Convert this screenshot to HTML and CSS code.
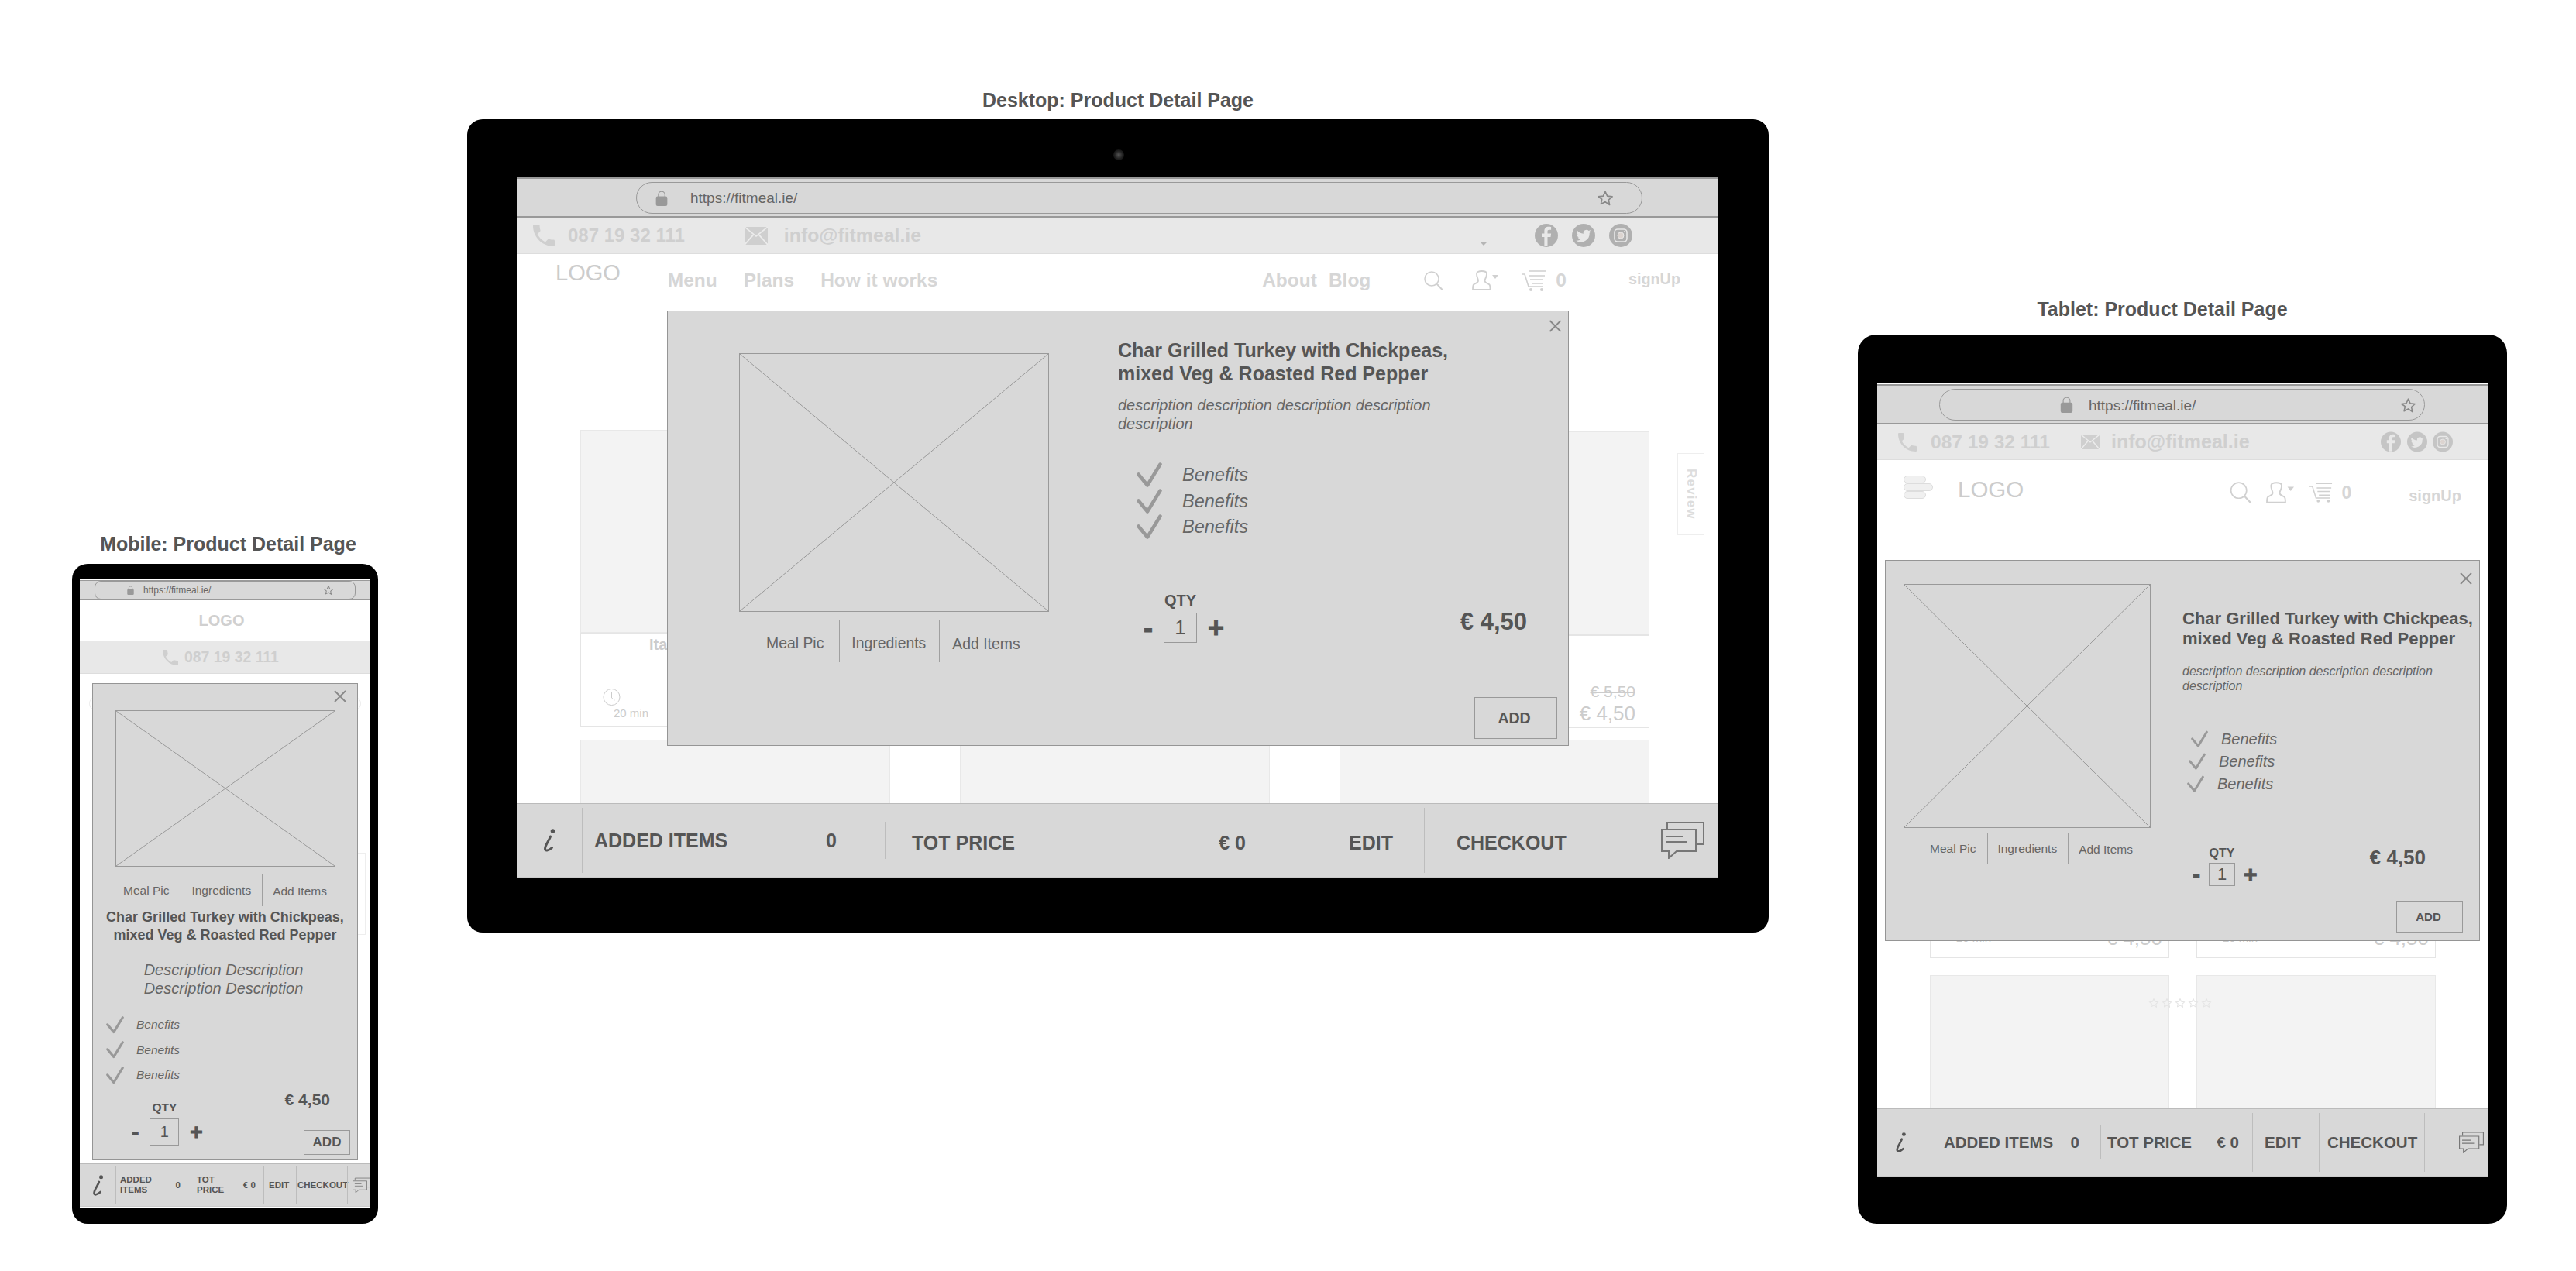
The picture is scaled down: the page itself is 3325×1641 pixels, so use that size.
FILE: index.html
```html
<!DOCTYPE html>
<html lang="en">
<head>
  <meta charset="UTF-8">
  <title>Product Detail Page - Wireframes</title>
  <link rel="stylesheet" href="styles.css">
</head>
<body>
  <svg class="sprite" xmlns="http://www.w3.org/2000/svg">
    <symbol id="i-lock" viewBox="0 0 14 20"><path d="M3 9V6a4 4 0 0 1 8 0v3" fill="none" stroke="currentColor" stroke-width="1"/><rect y="8" width="14" height="12" rx="2" fill="currentColor"/></symbol>
    <symbol id="i-star" viewBox="0 0 24 24"><path d="M12 2.5l2.9 6.4 7 .8-5.200 4.700 1.400 6.900L12 17l-6.100 3.300 1.400-6.900L2.100 9.700l7-.8z" fill="none" stroke="currentColor" stroke-width="1.800" stroke-linejoin="round"/></symbol>
    <symbol id="i-phone" viewBox="3 3 18 18"><path d="M6.600 10.800c1.400 2.800 3.800 5.100 6.600 6.600l2.200-2.200c.3-.3.700-.4 1-.2 1.100.4 2.300.6 3.600.6.600 0 1 .4 1 1V20c0 .6-.4 1-1 1C10.600 21 3 13.400 3 4c0-.6.400-1 1-1h3.500c.6 0 1 .4 1 1 0 1.300.2 2.500.6 3.600.1.300 0 .7-.2 1z" fill="currentColor"/></symbol>
    <symbol id="i-mail" viewBox="0 0 26 23" preserveAspectRatio="none"><rect width="26" height="23" fill="currentColor"/><path d="M0 0l13 12L26 0M0 23l10-13M26 23L16 10" fill="none" stroke="#ececec" stroke-width="1.600"/></symbol>
    <symbol id="i-search" viewBox="0 0 25 25"><circle cx="10" cy="10" r="9" fill="none" stroke="currentColor" stroke-width="1.500"/><path d="M16.500 16.500L24 24.500" stroke="currentColor" stroke-width="2"/></symbol>
    <symbol id="i-user" viewBox="0 0 34 26"><path d="M6 4.500C6 2 9 1 12.500 1S19 2 19 4.500c0 5-2.500 6-2.500 9 0 3 4 3 6 5 1 1 1 3 1 6.500H1c0-3.500 0-5.500 1-6.500 2-2 6-2 6-5 0-3-2-4-2-9z" fill="none" stroke="currentColor" stroke-width="1.800"/><path d="M26 6h8l-4 5z" fill="currentColor"/></symbol>
    <symbol id="i-cart" viewBox="0 0 32 27"><path d="M0 5h4l5 16h19M9 1h22M10 7h20M11 12h17M13 17h15" fill="none" stroke="currentColor" stroke-width="1.600"/><circle cx="12" cy="25" r="2" fill="currentColor"/><circle cx="26" cy="25" r="2" fill="currentColor"/></symbol>
    <symbol id="i-check" viewBox="0 0 33 33"><path d="M2.500 15.500L14 29.500 30.500 2.500" fill="none" stroke="currentColor" stroke-width="4.500" stroke-linecap="round" stroke-linejoin="round"/></symbol>
    <symbol id="i-info" viewBox="0 0 16 30"><circle cx="12.500" cy="3" r="2.800" fill="currentColor"/><path d="M9.500 10C8 15 2.500 21 2.500 26c0 3 4 3 9-1.500" fill="none" stroke="currentColor" stroke-width="3" stroke-linecap="round"/></symbol>
    <symbol id="i-chat" viewBox="0 0 56 48"><path d="M8 9V1h47v28h-9" fill="none" stroke="currentColor" stroke-width="2"/><path d="M1 10h44v28H20l-10 9v-9H1z" fill="none" stroke="currentColor" stroke-width="2"/><path d="M7 19h21M7 26h27" stroke="currentColor" stroke-width="2"/></symbol>
    <symbol id="i-fb" viewBox="0 0 30 30"><circle cx="15" cy="15" r="15" fill="currentColor"/><path d="M16.500 29V17h4l.6-4.500h-4.600V10c0-1.400.5-2.200 2.300-2.200h2.300V4c-.6 0-1.800-.2-3.200-.2-3.300 0-5.500 2-5.500 5.600v3.100H9V17h3.400v12z" fill="#e8e8e8"/></symbol>
    <symbol id="i-tw" viewBox="0 0 30 30"><circle cx="15" cy="15" r="15" fill="currentColor"/><path transform="translate(4.500 4.500) scale(.88)" d="M23 5.900c-.8.400-1.700.6-2.600.7.900-.6 1.600-1.400 2-2.500-.9.500-1.800.9-2.900 1.100a4.500 4.500 0 0 0-7.700 4.100A12.800 12.800 0 0 1 2.500 4.600a4.500 4.500 0 0 0 1.400 6 4.500 4.500 0 0 1-2-.6v.1c0 2.200 1.500 4 3.600 4.400-.7.200-1.400.2-2 .1.600 1.800 2.200 3.100 4.200 3.100A9 9 0 0 1 1 19.600 12.800 12.800 0 0 0 20.700 8.200c.9-.6 1.700-1.400 2.300-2.300z" fill="#e8e8e8"/></symbol>
    <symbol id="i-ig" viewBox="0 0 30 30"><circle cx="15" cy="15" r="15" fill="currentColor"/><rect x="7" y="7" width="16" height="16" rx="4" fill="none" stroke="#e8e8e8" stroke-width="1.600"/><circle cx="15" cy="15" r="4" fill="#dcd4d0" stroke="#e8e8e8" stroke-width="1"/><circle cx="20" cy="10" r="1" fill="#e8e8e8"/></symbol>
    <symbol id="i-clock" viewBox="0 0 22 24"><circle cx="11" cy="12" r="10.500" fill="none" stroke="currentColor"/><path d="M11 5v8l4 3" fill="none" stroke="currentColor"/></symbol>
    <symbol id="i-close" viewBox="0 0 16 16"><path d="M1 1l14 14M15 1L1 15" stroke="currentColor" stroke-width="1.800"/></symbol>
    <symbol id="i-cross" viewBox="0 0 100 100" preserveAspectRatio="none"><path d="M0 0L100 100M100 0L0 100" stroke="currentColor" stroke-width="1" vector-effect="non-scaling-stroke"/></symbol>
  </svg>

  <!-- mobile -->
  <section class="frame mobile">
    <h2 class="frame-title">Mobile: Product Detail Page</h2>
    <div class="device">
      <div class="screen">
        <div class="browser-bar">
          <div class="url-pill">
            <svg class="ic-lock"><use href="#i-lock"/></svg>
            <span class="url">https://fitmeal.ie/</span>
            <svg class="ic-star"><use href="#i-star"/></svg>
          </div>
        </div>
        <div class="mobile-logo">LOGO</div>
        <div class="contact-strip">
          <svg class="ic-phone"><use href="#i-phone"/></svg>
          <span class="contact-text phone-no">087 19 32 111</span>
        </div>
        <div class="page-body">
          <div class="search-pill"></div>
          <div class="card"></div>
        </div>
        <div class="cart-bar">
          <div class="cell cell-info"><svg class="ic-info"><use href="#i-info"/></svg></div>
          <div class="cell cell-added"><span>ADDED<br>ITEMS</span><span>0</span></div>
          <div class="cell cell-total"><span>TOT<br>PRICE</span><span>€ 0</span></div>
          <div class="cell cell-edit">EDIT</div>
          <div class="cell cell-checkout">CHECKOUT</div>
          <div class="cell cell-chat"><svg class="ic-chat"><use href="#i-chat"/></svg></div>
        </div>
        <div class="modal">
          <svg class="modal-close"><use href="#i-close"/></svg>
          <div class="gallery">
            <div class="placeholder"><svg><use href="#i-cross"/></svg></div>
            <div class="tabs">
              <span class="tab">Meal Pic</span>
              <span class="tab">Ingredients</span>
              <span class="tab">Add Items</span>
            </div>
          </div>
          <div class="details">
            <h3 class="meal-name">Char Grilled Turkey with Chickpeas,<br>mixed Veg &amp; Roasted Red Pepper</h3>
            <p class="meal-desc">Description Description<br>Description Description</p>
            <ul class="benefits">
              <li><svg class="ic-check"><use href="#i-check"/></svg>Benefits</li>
              <li><svg class="ic-check"><use href="#i-check"/></svg>Benefits</li>
              <li><svg class="ic-check"><use href="#i-check"/></svg>Benefits</li>
            </ul>
            <div class="buy">
              <div class="qty">
                <span class="qty-label">QTY</span>
                <span class="qty-btn">-</span>
                <span class="qty-value">1</span>
                <span class="qty-btn">+</span>
              </div>
              <div class="buy-side">
                <span class="price">€ 4,50</span>
                <span class="add-btn">ADD</span>
              </div>
            </div>
          </div>
        </div>
      </div>
    </div>
  </section>

  <!-- desktop -->
  <section class="frame desktop">
    <h2 class="frame-title">Desktop: Product Detail Page</h2>
    <div class="device">
      <span class="webcam"></span>
      <div class="screen">
        <div class="browser-bar">
          <div class="url-pill">
            <svg class="ic-lock"><use href="#i-lock"/></svg>
            <span class="url">https://fitmeal.ie/</span>
            <svg class="ic-star"><use href="#i-star"/></svg>
          </div>
        </div>
        <div class="contact-strip">
          <svg class="ic-phone"><use href="#i-phone"/></svg>
          <span class="contact-text phone-no">087 19 32 111</span>
          <svg class="ic-mail"><use href="#i-mail"/></svg>
          <span class="contact-text email">info@fitmeal.ie</span>
          <div class="socials">
            <span class="caret"></span>
            <svg><use href="#i-fb"/></svg>
            <svg><use href="#i-tw"/></svg>
            <svg><use href="#i-ig"/></svg>
          </div>
        </div>
        <nav class="site-nav">
          <span class="logo">LOGO</span>
          <a class="nav-link nav-menu">Menu</a>
          <a class="nav-link nav-plans">Plans</a>
          <a class="nav-link nav-how">How it works</a>
          <a class="nav-link nav-about">About</a>
          <a class="nav-link nav-blog">Blog</a>
          <svg class="ic-search"><use href="#i-search"/></svg>
          <svg class="ic-user"><use href="#i-user"/></svg>
          <svg class="ic-cart"><use href="#i-cart"/></svg>
          <span class="nav-link cart-count">0</span>
          <a class="nav-link sign-up">signUp</a>
        </nav>
        <div class="page-body">
          <div class="card-grid">
            <article class="card">
              <div class="card-img"></div>
              <div class="card-foot">
                <div class="card-time"><svg class="ic-clock"><use href="#i-clock"/></svg><span>20 min</span></div>
                <span class="card-name">Italian Chicken</span>
                <div class="card-prices"><s>€ 5,50</s><span>€ 4,50</span></div>
              </div>
            </article>
            <article class="card">
              <div class="card-img"></div>
              <div class="card-foot">
                <div class="card-time"><svg class="ic-clock"><use href="#i-clock"/></svg><span>20 min</span></div>
                <span class="card-name">Italian Chicken</span>
                <div class="card-prices"><s>€ 5,50</s><span>€ 4,50</span></div>
              </div>
            </article>
            <article class="card">
              <div class="card-img"></div>
              <div class="card-foot">
                <div class="card-time"><svg class="ic-clock"><use href="#i-clock"/></svg><span>20 min</span></div>
                <span class="card-name">Italian Chicken</span>
                <div class="card-prices"><s>€ 5,50</s><span>€ 4,50</span></div>
              </div>
            </article>
            <article class="card"><div class="card-img"></div></article>
            <article class="card"><div class="card-img"></div></article>
            <article class="card"><div class="card-img"></div></article>
          </div>
        </div>
        <div class="cart-bar">
          <div class="cell cell-info"><svg class="ic-info"><use href="#i-info"/></svg></div>
          <div class="cell cell-added"><span>ADDED ITEMS</span><span>0</span></div>
          <div class="cell cell-total"><span>TOT PRICE</span><span>€ 0</span></div>
          <div class="cell cell-edit">EDIT</div>
          <div class="cell cell-checkout">CHECKOUT</div>
          <div class="cell cell-chat"><svg class="ic-chat"><use href="#i-chat"/></svg></div>
        </div>
        <div class="review-tab">Review</div>
        <div class="modal">
          <svg class="modal-close"><use href="#i-close"/></svg>
          <div class="gallery">
            <div class="placeholder"><svg><use href="#i-cross"/></svg></div>
            <div class="tabs">
              <span class="tab">Meal Pic</span>
              <span class="tab">Ingredients</span>
              <span class="tab">Add Items</span>
            </div>
          </div>
          <div class="details">
            <h3 class="meal-name">Char Grilled Turkey with Chickpeas,<br>mixed Veg &amp; Roasted Red Pepper</h3>
            <p class="meal-desc">description description description description<br>description</p>
            <ul class="benefits">
              <li><svg class="ic-check"><use href="#i-check"/></svg>Benefits</li>
              <li><svg class="ic-check"><use href="#i-check"/></svg>Benefits</li>
              <li><svg class="ic-check"><use href="#i-check"/></svg>Benefits</li>
            </ul>
            <div class="buy">
              <div class="qty">
                <span class="qty-label">QTY</span>
                <span class="qty-btn">-</span>
                <span class="qty-value">1</span>
                <span class="qty-btn">+</span>
              </div>
              <div class="buy-side">
                <span class="price">€ 4,50</span>
                <span class="add-btn">ADD</span>
              </div>
            </div>
          </div>
        </div>
      </div>
    </div>
  </section>

  <!-- tablet -->
  <section class="frame tablet">
    <h2 class="frame-title">Tablet: Product Detail Page</h2>
    <div class="device">
      <div class="screen">
        <div class="browser-bar">
          <div class="url-pill">
            <svg class="ic-lock"><use href="#i-lock"/></svg>
            <span class="url">https://fitmeal.ie/</span>
            <svg class="ic-star"><use href="#i-star"/></svg>
          </div>
        </div>
        <div class="contact-strip">
          <svg class="ic-phone"><use href="#i-phone"/></svg>
          <span class="contact-text phone-no">087 19 32 111</span>
          <svg class="ic-mail"><use href="#i-mail"/></svg>
          <span class="contact-text email">info@fitmeal.ie</span>
          <div class="socials">
            <svg><use href="#i-fb"/></svg>
            <svg><use href="#i-tw"/></svg>
            <svg><use href="#i-ig"/></svg>
          </div>
        </div>
        <nav class="site-nav">
          <div class="burger"><span></span><span></span><span></span></div>
          <span class="logo">LOGO</span>
          <svg class="ic-search"><use href="#i-search"/></svg>
          <svg class="ic-user"><use href="#i-user"/></svg>
          <svg class="ic-cart"><use href="#i-cart"/></svg>
          <span class="nav-link cart-count">0</span>
          <a class="nav-link sign-up">signUp</a>
        </nav>
        <div class="page-body">
          <div class="card-grid">
            <article class="card">
              <div class="card-img"></div>
              <div class="card-foot">
                <div class="card-time"><span>20 min</span></div>
                <div class="card-prices"><span>€ 4,50</span></div>
              </div>
            </article>
            <article class="card">
              <div class="card-img"></div>
              <div class="card-foot">
                <div class="card-time"><span>20 min</span></div>
                <div class="card-prices"><span>€ 4,50</span></div>
              </div>
            </article>
            <article class="card"><div class="card-img"></div></article>
            <article class="card"><div class="card-img"></div></article>
          </div>
        </div>
        <div class="cart-bar">
          <div class="cell cell-info"><svg class="ic-info"><use href="#i-info"/></svg></div>
          <div class="cell cell-added"><span>ADDED ITEMS</span><span>0</span></div>
          <div class="cell cell-total"><span>TOT PRICE</span><span>€ 0</span></div>
          <div class="cell cell-edit">EDIT</div>
          <div class="cell cell-checkout">CHECKOUT</div>
          <div class="cell cell-chat"><svg class="ic-chat"><use href="#i-chat"/></svg></div>
        </div>
        <div class="stray-stars">
          <svg><use href="#i-star"/></svg>
          <svg><use href="#i-star"/></svg>
          <svg><use href="#i-star"/></svg>
          <svg><use href="#i-star"/></svg>
          <svg><use href="#i-star"/></svg>
        </div>
        <div class="modal">
          <svg class="modal-close"><use href="#i-close"/></svg>
          <div class="gallery">
            <div class="placeholder"><svg><use href="#i-cross"/></svg></div>
            <div class="tabs">
              <span class="tab">Meal Pic</span>
              <span class="tab">Ingredients</span>
              <span class="tab">Add Items</span>
            </div>
          </div>
          <div class="details">
            <h3 class="meal-name">Char Grilled Turkey with Chickpeas,<br>mixed Veg &amp; Roasted Red Pepper</h3>
            <p class="meal-desc">description description description description<br>description</p>
            <ul class="benefits">
              <li><svg class="ic-check"><use href="#i-check"/></svg>Benefits</li>
              <li><svg class="ic-check"><use href="#i-check"/></svg>Benefits</li>
              <li><svg class="ic-check"><use href="#i-check"/></svg>Benefits</li>
            </ul>
            <div class="buy">
              <div class="qty">
                <span class="qty-label">QTY</span>
                <span class="qty-btn">-</span>
                <span class="qty-value">1</span>
                <span class="qty-btn">+</span>
              </div>
              <div class="buy-side">
                <span class="price">€ 4,50</span>
                <span class="add-btn">ADD</span>
              </div>
            </div>
          </div>
        </div>
      </div>
    </div>
  </section>
</body>
</html>
```

FILE: styles.css
```css
* {
  box-sizing: border-box;
}

body {
  margin: 0;
  width: 3325px;
  height: 1641px;
  position: relative;
  overflow: hidden;
  background: #fff;
  font-family: "Liberation Sans", Arial, sans-serif;
  color: #555;
}

.sprite {
  display: none;
}

svg {
  display: block;
  flex: none;
}

/* canvas: the three devices */
.frame {
  position: absolute;
}

.frame-title {
  margin: 0;
  height: 28px;
  font-size: 25px;
  line-height: 28px;
  font-weight: 700;
  text-align: center;
  white-space: nowrap;
  color: #555;
}

.device {
  position: relative;
  background: #000;
}

.screen {
  position: relative;
  display: flex;
  flex-direction: column;
  overflow: hidden;
  background: #fff;
}

.webcam {
  position: absolute;
  left: 834px;
  top: 39px;
  width: 14px;
  height: 14px;
  border-radius: 50%;
  background: radial-gradient(circle, #555 0%, #222 50%, #000 100%);
}

/* browser chrome */
.browser-bar {
  flex: none;
  display: flex;
  align-items: center;
  background: #d8d8d8;
  border-top: 2px solid #999;
  border-bottom: 2px solid #999;
}

.url-pill {
  display: flex;
  align-items: center;
  border: 1px solid #999;
  color: #666;
}

.url {
  white-space: nowrap;
  font-weight: 400;
}

.ic-lock {
  color: #999;
}

.ic-star {
  margin-left: auto;
  color: #888;
}

/* contact strip */
.contact-strip {
  flex: none;
  display: flex;
  align-items: center;
  background: #e8e8e8;
  border-bottom: 1px solid #ddd;
  color: #cfcfcf;
}

.contact-text {
  font-weight: 700;
  white-space: nowrap;
}

.socials {
  margin-left: auto;
  display: flex;
  align-items: center;
  color: #b0b0b0;
}

.caret {
  align-self: flex-end;
  width: 0;
  height: 0;
  border-left: 4px solid transparent;
  border-right: 4px solid transparent;
  border-top: 4px solid #b5b5b5;
}

/* site nav */
.site-nav {
  flex: none;
  display: flex;
  align-items: center;
  color: #d6d6d6;
}

.logo {
  color: #ccc;
  font-weight: 400;
}

.nav-link {
  font-weight: 700;
  white-space: nowrap;
}

.ic-search,
.ic-user,
.ic-cart {
  color: #d0d0d0;
}

.burger {
  display: flex;
  flex-direction: column;
  align-items: flex-start;
}

.burger span {
  display: block;
  width: 29px;
  height: 10px;
  background: #f0f0f0;
  border: 1px solid #ddd;
  border-radius: 5px;
}

.burger span:nth-child(2) {
  width: 38px;
}

/* background page */
.page-body {
  flex: 1;
  min-height: 0;
  overflow: hidden;
}

.card-grid {
  display: grid;
}

.card-img {
  background: #f3f3f3;
  border: 1px solid #e8e8e8;
}

.card-foot {
  display: flex;
  background: #fff;
  border: 1px solid #e5e5e5;
  border-top: 2px solid #e5e5e5;
  color: #ccc;
}

.card-time {
  display: flex;
  flex-direction: column;
  justify-content: flex-end;
  white-space: nowrap;
}

.card-name {
  font-weight: 700;
  white-space: nowrap;
}

.card-prices {
  margin-left: auto;
  display: flex;
  flex-direction: column;
  align-items: flex-end;
  justify-content: flex-end;
  white-space: nowrap;
}

/* cart bar */
.cart-bar {
  flex: none;
  display: grid;
  align-items: stretch;
  background: #d8d8d8;
  border-top: 1px solid #bbb;
  border-bottom: 1px solid #ccc;
  font-weight: 700;
  color: #555;
  white-space: nowrap;
}

.cell {
  display: flex;
  align-items: center;
  justify-content: space-between;
  border-left: 1px solid #bdbdbd;
}

.cell-info {
  border-left: none;
  justify-content: center;
}

.ic-info {
  color: #555;
}

.ic-chat {
  color: #777;
}

.cell-chat {
  justify-content: flex-end;
}

/* modal */
.modal {
  position: absolute;
  display: flex;
  background: #d8d8d8;
  border: 1px solid #959595;
}

.modal-close {
  position: absolute;
  color: #888;
}

.gallery {
  flex: none;
}

.placeholder {
  border: 1px solid #999;
  color: #999;
}

.placeholder svg {
  width: 100%;
  height: 100%;
}

.tabs {
  display: flex;
  color: #666;
}

.tab {
  display: flex;
  align-items: center;
  white-space: nowrap;
}

.tab + .tab {
  border-left: 1px solid #a0a0a0;
}

.details {
  display: flex;
  flex-direction: column;
  min-width: 0;
}

.meal-name {
  margin: 0;
  font-weight: 700;
  white-space: nowrap;
  color: #555;
}

.meal-desc {
  margin: 0;
  font-style: italic;
  white-space: nowrap;
  color: #666;
}

.benefits {
  margin: 0;
  padding: 0;
  list-style: none;
  font-style: italic;
  color: #666;
}

.benefits li {
  display: flex;
  align-items: center;
}

.ic-check {
  color: #999;
}

.buy {
  flex: 1;
  display: flex;
  min-height: 0;
}

.qty {
  display: grid;
  grid-template-columns: auto auto auto;
  align-items: center;
  align-self: flex-start;
  justify-items: center;
}

.qty-label {
  grid-column: 2;
  grid-row: 1;
  font-weight: 700;
}

.qty-btn {
  grid-column: 1;
  grid-row: 2;
  font-weight: 700;
  color: #555;
  -webkit-text-stroke: 1px #555;
}

.qty-value {
  grid-column: 2;
  grid-row: 2;
  display: flex;
  align-items: center;
  justify-content: center;
  border: 1px solid #999;
  color: #555;
}

.qty-value + .qty-btn {
  grid-column: 3;
}

.buy-side {
  margin-left: auto;
  display: flex;
  flex-direction: column;
  align-items: flex-end;
}

.price {
  font-weight: 700;
  white-space: nowrap;
}

.add-btn {
  margin-top: auto;
  display: flex;
  align-items: center;
  justify-content: center;
  border: 1px solid #999;
  font-weight: 700;
}

/* ---------- desktop ---------- */
.desktop {
  left: 603px;
  top: 115px;
}

.desktop .device {
  width: 1680px;
  height: 1050px;
  margin-top: 11px;
  padding: 75px 65px 0 64px;
  border-radius: 20px;
}

.desktop .screen {
  width: 1551px;
  height: 904px;
}

.desktop .browser-bar {
  height: 52px;
}

.desktop .url-pill {
  width: 1299px;
  height: 41px;
  margin-left: 154px;
  padding: 0 36px 0 24px;
  border-radius: 21px;
  font-size: 19px;
}

.desktop .ic-lock {
  width: 16px;
  height: 21px;
}

.desktop .url {
  margin: 2px 0 0 29px;
}

.desktop .ic-star {
  width: 22px;
  height: 22px;
  margin-top: 2px;
}

.desktop .contact-strip {
  height: 47px;
  padding-left: 20px;
  font-size: 24px;
}

.desktop .ic-phone {
  width: 30px;
  height: 28px;
}

.desktop .phone-no {
  margin-left: 16px;
}

.desktop .ic-mail {
  width: 30px;
  height: 23px;
  margin-left: 77px;
}

.desktop .email {
  margin-left: 21px;
  font-size: 24.800px;
}

.desktop .socials {
  gap: 18px;
  padding-right: 111px;
}

.desktop .socials svg {
  width: 30px;
  height: 30px;
}

.desktop .caret {
  margin-right: 44px;
  margin-bottom: 2px;
}

.desktop .site-nav {
  height: 68px;
  padding: 0 49px 0 50px;
  font-size: 24.500px;
}

.desktop .logo {
  font-size: 29px;
  margin-bottom: 20px;
}

.desktop .nav-menu {
  margin-left: 61px;
}

.desktop .nav-plans {
  margin-left: 34px;
}

.desktop .nav-how {
  margin-left: 34px;
}

.desktop .nav-about {
  margin-left: auto;
}

.desktop .nav-blog {
  margin-left: 15px;
}

.desktop .ic-search {
  width: 25px;
  height: 25px;
  margin-left: 69px;
}

.desktop .ic-user {
  width: 34px;
  height: 26px;
  margin-left: 37px;
}

.desktop .ic-cart {
  width: 32px;
  height: 27px;
  margin-left: 30px;
}

.desktop .cart-count {
  margin-left: 12px;
}

.desktop .sign-up {
  margin-left: 80px;
  margin-bottom: 4px;
  font-size: 19.800px;
}

.desktop .page-body {
  padding: 159px 0 0 82px;
}

.desktop .card-grid {
  grid-template-columns: repeat(3, 400px);
  column-gap: 90px;
  row-gap: 15px;
}

.desktop .card:nth-child(3) {
  margin-top: 2px;
}

.desktop .card-img {
  height: 262px;
}

.desktop .card-foot {
  height: 121px;
  padding: 3px 17px 3px 28px;
}

.desktop .ic-clock {
  width: 23px;
  height: 24px;
}

.desktop .card-time span {
  margin-left: 14px;
  font-size: 15px;
  margin-bottom: 5px;
}

.desktop .card-name {
  margin-left: 1px;
  font-size: 20px;
  line-height: 20px;
}

.desktop .card-prices {
  font-size: 26px;
  line-height: 30px;
}

.desktop .card-prices s {
  font-size: 21px;
  line-height: 26px;
}

.desktop .cart-bar {
  height: 96px;
  grid-template-columns: 84px 391px 533px 163px 224px 156px;
  font-size: 25px;
}

.desktop .cell {
  margin: 5px 0;
}

.desktop .cell-added {
  padding: 0 62px 0 15px;
}

.desktop .cell-added span {
  margin-top: 1px;
}

.desktop .cell-total {
  margin: 23px 0;
  padding: 6px 67px 0 34px;
}

.desktop .cell-edit {
  padding: 6px 0 0 65px;
}

.desktop .cell-checkout {
  padding: 6px 0 0 41px;
}

.desktop .ic-info {
  width: 16px;
  height: 30px;
}

.desktop .ic-chat {
  width: 56px;
  height: 48px;
  margin-right: 18px;
}

.desktop .cell-chat {
  justify-content: flex-end;
}

.desktop .review-tab {
  position: absolute;
  right: 18px;
  top: 356px;
  width: 35px;
  height: 106px;
  display: flex;
  align-items: center;
  justify-content: center;
  background: #fff;
  border: 1px solid #eee;
  writing-mode: vertical-rl;
  font-size: 17px;
  font-weight: 700;
  letter-spacing: 1.200px;
  color: #ddd;
}

.desktop .modal {
  left: 194px;
  top: 172px;
  width: 1164px;
  height: 562px;
  padding: 35px 14px 8px 92px;
}

.desktop .modal-close {
  right: 7px;
  top: 11px;
  width: 19px;
  height: 16px;
}

.desktop .gallery {
  width: 400px;
  margin-top: 19px;
}

.desktop .placeholder {
  height: 334px;
}

.desktop .tabs {
  height: 55px;
  margin-top: 10px;
  font-size: 19.400px;
}

.desktop .tab {
  padding-top: 5px;
}

.desktop .tab:nth-child(1) {
  padding: 5px 20px 0 35px;
}

.desktop .tab:nth-child(2) {
  padding: 5px 17px 0 15px;
}

.desktop .tab:nth-child(3) {
  padding: 7px 0 0 16px;
}

.desktop .details {
  flex: 1;
  margin-left: 89px;
}

.desktop .meal-name {
  font-size: 25px;
  line-height: 30px;
}

.desktop .meal-desc {
  margin-top: 14px;
  font-size: 20px;
  line-height: 24px;
}

.desktop .benefits {
  margin-top: 38px;
  padding-left: 24px;
  font-size: 23.500px;
}

.desktop .benefits li {
  height: 33.500px;
  gap: 26px;
}

.desktop .ic-check {
  width: 33px;
  height: 33px;
}

.desktop .buy {
  margin-top: 65px;
}

.desktop .qty {
  margin-left: 33px;
  column-gap: 14px;
}

.desktop .qty-label {
  font-size: 20px;
  line-height: 24px;
  margin-bottom: 4px;
}

.desktop .qty-btn {
  font-size: 36px;
  line-height: 39px;
}

.desktop .qty-value {
  width: 43px;
  height: 39px;
  font-size: 26px;
}

.desktop .price {
  margin: 22px 39px 0 0;
  font-size: 31px;
  line-height: 36px;
}

.desktop .add-btn {
  width: 107px;
  height: 54px;
  padding-right: 4px;
  font-size: 19.500px;
}

/* ---------- tablet ---------- */
.tablet {
  left: 2398px;
  top: 385px;
}

.tablet .frame-title {
  padding-right: 52px;
}

.tablet .device {
  width: 838px;
  height: 1148px;
  margin-top: 19px;
  padding: 62px 0 0 25px;
  border-radius: 24px;
}

.tablet .screen {
  width: 789px;
  height: 1025px;
  padding-top: 2px;
}

.tablet .browser-bar {
  height: 52px;
}

.tablet .url-pill {
  width: 627px;
  height: 41px;
  margin-left: 80px;
  padding: 0 10px 0 154px;
  border-radius: 21px;
  font-size: 19px;
}

.tablet .ic-lock {
  width: 19px;
  height: 22px;
}

.tablet .url {
  margin: 3px 0 0 19px;
}

.tablet .ic-star {
  width: 21px;
  height: 21px;
  margin-top: 2px;
}

.tablet .contact-strip {
  height: 46px;
  padding-left: 27px;
  font-size: 24.500px;
}

.tablet .ic-phone {
  width: 24px;
  height: 24px;
}

.tablet .phone-no {
  margin-left: 18px;
}

.tablet .ic-mail {
  width: 24px;
  height: 19px;
  margin-left: 40px;
}

.tablet .email {
  margin-left: 15px;
  font-size: 25px;
}

.tablet .socials {
  gap: 7.500px;
  padding-right: 46px;
  color: #c5c5c5;
}

.tablet .socials svg {
  width: 26px;
  height: 27px;
}

.tablet .site-nav {
  height: 84px;
  padding: 0 35px 0 34px;
  font-size: 21px;
}

.tablet .burger {
  margin-bottom: 14px;
}

.tablet .logo {
  margin-left: 32px;
  margin-bottom: 8px;
  font-size: 29.500px;
}

.tablet .ic-search {
  width: 29px;
  height: 28px;
  margin-left: auto;
}

.tablet .ic-user {
  width: 36px;
  height: 28px;
  margin-left: 18px;
}

.tablet .ic-cart {
  width: 30px;
  height: 28px;
  margin-left: 20px;
}

.tablet .cart-count {
  margin-left: 11px;
  font-size: 23px;
}

.tablet .sign-up {
  margin-left: 74px;
  margin-top: 8px;
  font-size: 20px;
}

.tablet .page-body {
  padding: 52px 0 0 68px;
}

.tablet .card-grid {
  grid-template-columns: repeat(2, 309px);
  column-gap: 35px;
  row-gap: 22px;
}

.tablet .card-img {
  height: 380px;
}

.tablet .card-foot {
  height: 127px;
  padding: 0 8px 17px 33px;
  font-size: 15px;
}

.tablet .card-prices {
  font-size: 26px;
  line-height: 26px;
  margin-bottom: -5px;
}

.tablet .cart-bar {
  height: 88px;
  grid-template-columns: 69px 219px 196px 86px 136px 83px;
  font-size: 20.500px;
}

.tablet .cell {
  margin: 5px 0;
}

.tablet .cell-info svg {
  margin-right: 8px;
}

.tablet .cell-added {
  padding: 0 27px 0 16px;
}

.tablet .cell-total {
  margin: 21px 0;
  padding: 0 17px 0 8px;
}

.tablet .cell-edit {
  padding-left: 15px;
}

.tablet .cell-checkout {
  padding-left: 10px;
}

.tablet .ic-info {
  width: 15px;
  height: 26px;
}

.tablet .ic-chat {
  width: 32px;
  height: 28px;
  margin-right: 6px;
}

.tablet .stray-stars {
  position: absolute;
  left: 350px;
  top: 794px;
  display: flex;
  gap: 3px;
  color: #e4e4e4;
}

.tablet .stray-stars svg {
  width: 14px;
  height: 14px;
}

.tablet .modal {
  left: 10px;
  top: 229px;
  width: 768px;
  height: 492px;
  padding: 30px 21px 10px 23px;
}

.tablet .modal-close {
  right: 8px;
  top: 15px;
  width: 18px;
  height: 16px;
}

.tablet .gallery {
  width: 319px;
}

.tablet .placeholder {
  height: 315px;
}

.tablet .tabs {
  height: 41px;
  margin-top: 6px;
  font-size: 15.500px;
}

.tablet .tab:nth-child(1) {
  padding: 0 15px 0 34px;
}

.tablet .tab:nth-child(2) {
  padding: 0 14px 0 12px;
}

.tablet .tab:nth-child(3) {
  padding: 2px 0 0 13px;
}

.tablet .details {
  flex: 1;
  margin-left: 41px;
  padding-top: 32px;
}

.tablet .meal-name {
  font-size: 22px;
  line-height: 26px;
}

.tablet .meal-desc {
  margin-top: 19px;
  font-size: 16px;
  line-height: 19px;
}

.tablet .benefits {
  margin-top: 45px;
  font-size: 20px;
}

.tablet .benefits li {
  height: 29px;
  gap: 17px;
}

.tablet .benefits li:nth-child(1) {
  padding-left: 11px;
}

.tablet .benefits li:nth-child(2) {
  padding-left: 8px;
}

.tablet .benefits li:nth-child(3) {
  padding-left: 6px;
}

.tablet .ic-check {
  width: 22px;
  height: 23px;
}

.tablet .buy {
  margin-top: 65px;
}

.tablet .qty {
  margin-left: 13px;
  column-gap: 11px;
}

.tablet .qty-label {
  font-size: 16px;
  line-height: 20px;
  margin-bottom: 2px;
}

.tablet .qty-btn {
  font-size: 30px;
  line-height: 30px;
}

.tablet .qty-value {
  width: 34px;
  height: 30px;
  font-size: 22px;
}

.tablet .price {
  margin-right: 48px;
  font-size: 26px;
  line-height: 30px;
}

.tablet .add-btn {
  width: 86px;
  height: 41px;
  padding-right: 3px;
  font-size: 15px;
}

/* ---------- mobile ---------- */
.mobile {
  left: 93px;
  top: 688px;
}

.mobile .frame-title {
  padding-left: 8px;
}

.mobile .device {
  width: 395px;
  height: 852px;
  margin-top: 12px;
  padding: 20px 0 0 10px;
  border-radius: 20px;
}

.mobile .screen {
  width: 375px;
  height: 812px;
  padding-top: 1px;
}

.mobile .browser-bar {
  height: 26px;
  border-top-width: 1px;
  border-bottom-width: 1px;
}

.mobile .url-pill {
  width: 337px;
  height: 24px;
  margin-left: 19px;
  padding: 0 27px 0 40px;
  border-radius: 8px;
  font-size: 12px;
}

.mobile .ic-lock {
  width: 11px;
  height: 12px;
}

.mobile .url {
  margin-left: 11px;
}

.mobile .ic-star {
  width: 14px;
  height: 14px;
}

.mobile-logo {
  flex: none;
  height: 53px;
  display: flex;
  align-items: center;
  justify-content: center;
  padding-right: 9px;
  font-size: 20px;
  font-weight: 700;
  color: #d0d0d0;
}

.mobile .contact-strip {
  height: 42px;
  padding-left: 107px;
  font-size: 19.400px;
}

.mobile .ic-phone {
  width: 20px;
  height: 20px;
}

.mobile .phone-no {
  margin-left: 8px;
}

.mobile .page-body {
  padding: 30px 0 0 12px;
}

.mobile .search-pill {
  width: 351px;
  height: 17px;
  border: 1px solid #eee;
  border-radius: 8px;
}

.mobile .card {
  width: 338px;
  height: 106px;
  margin: 184px 0 0 19px;
  border: 1px solid #eee;
}

.mobile .cart-bar {
  height: 56px;
  margin-bottom: 2px;
  grid-template-columns: 46px 97px 94px 42px 66px 30px;
  font-size: 11.500px;
  line-height: 13px;
}

.mobile .cell {
  margin: 3px 0;
}

.mobile .cell-added {
  padding: 0 13px 0 5px;
}

.mobile .cell-total {
  margin: 13px 0;
  padding: 0 10px 0 7px;
}

.mobile .cell-edit {
  padding-left: 6px;
}

.mobile .cell-checkout {
  padding-left: 1px;
}

.mobile .ic-info {
  width: 17px;
  height: 27px;
}

.mobile .ic-chat {
  width: 23px;
  height: 25px;
}

.mobile .modal {
  left: 16px;
  top: 134px;
  width: 343px;
  height: 616px;
  flex-direction: column;
  padding: 34px 9px 6px 0;
}

.mobile .modal-close {
  right: 14px;
  top: 8px;
  width: 16px;
  height: 16px;
}

.mobile .gallery {
  width: 284px;
  margin-left: 29px;
}

.mobile .placeholder {
  height: 202px;
}

.mobile .tabs {
  height: 42px;
  margin-top: 9px;
  font-size: 15.500px;
}

.mobile .tab:nth-child(1) {
  padding: 2px 15px 0 10px;
}

.mobile .tab:nth-child(2) {
  padding: 2px 14px 0 13px;
}

.mobile .tab:nth-child(3) {
  padding: 4px 0 0 13px;
}

.mobile .details {
  flex: 1;
  min-height: 0;
}

.mobile .meal-name {
  margin-top: 3px;
  padding-left: 9px;
  text-align: center;
  font-size: 18px;
  line-height: 22.500px;
}

.mobile .meal-desc {
  margin-top: 22px;
  padding-left: 5px;
  text-align: center;
  font-size: 20px;
  line-height: 24px;
}

.mobile .benefits {
  margin-top: 19px;
  padding-left: 17px;
  font-size: 15.500px;
}

.mobile .benefits li {
  height: 32.500px;
  gap: 16px;
}

.mobile .ic-check {
  width: 23px;
  height: 23px;
}

.mobile .buy {
  margin-top: 2px;
}

.mobile .qty {
  margin: 13px 0 0 50px;
  column-gap: 14px;
}

.mobile .qty-label {
  font-size: 15.500px;
  line-height: 20px;
  margin-bottom: 4px;
}

.mobile .qty-btn {
  font-size: 28px;
  line-height: 35px;
}

.mobile .qty-value {
  width: 38px;
  height: 35px;
  font-size: 20px;
}

.mobile .price {
  margin-right: 26px;
  font-size: 21px;
  line-height: 26px;
}

.mobile .add-btn {
  width: 60px;
  height: 32px;
  font-size: 17px;
}
```
